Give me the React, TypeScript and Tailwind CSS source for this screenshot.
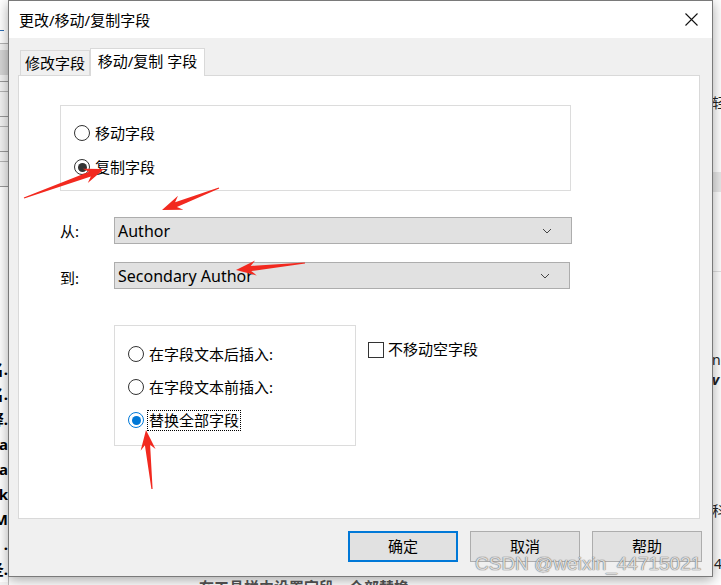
import React from 'react';

const FONT = "[font-family:'Noto_Sans','Noto_Sans_CJK_SC',sans-serif]";

type Pt = [number, number];

// red annotation arrow: tail -> tip
function arrow(tail: Pt, tip: Pt) {
  const dx = tip[0] - tail[0];
  const dy = tip[1] - tail[1];
  const len = Math.hypot(dx, dy);
  const ux = dx / len;
  const uy = dy / len;
  const nx = -uy;
  const ny = ux;
  const headLen = 20;
  const bx = tip[0] - ux * headLen;
  const by = tip[1] - uy * headLen;
  const nb = bx + ux * 5;
  const nby = by + uy * 5;
  const pts: Pt[] = [
    [tail[0] + nx * 0.6, tail[1] + ny * 0.6],
    [nb + nx * 2.6, nby + ny * 2.6],
    [bx + nx * 7.5, by + ny * 7.5],
    tip,
    [bx - nx * 7.5, by - ny * 7.5],
    [nb - nx * 2.6, nby - ny * 2.6],
    [tail[0] - nx * 0.6, tail[1] - ny * 0.6],
  ];
  return pts.map((p) => `${p[0].toFixed(1)},${p[1].toFixed(1)}`).join(' ');
}

function Radio({ checked, color = '#333333', label, focus }: { checked?: boolean; color?: string; label: string; focus?: boolean }) {
  return (
    <div className="flex items-center gap-[3px] h-[20px]">
      <span
        className="w-[16px] h-[16px] rounded-full bg-white flex items-center justify-center shrink-0"
        style={{ border: `1px solid ${checked ? color : '#333333'}` }}
      >
        {checked && <span className="w-[9px] h-[9px] rounded-full" style={{ background: color }} />}
      </span>
      <span
        className={`text-[15px] leading-[19px] text-black px-px ${focus ? 'border border-dotted border-black' : 'border border-transparent'}`}
      >
        {label}
      </span>
    </div>
  );
}

function Select({ value, width }: { value: string; width: string }) {
  return (
    <div className={`${width} h-[27px] bg-[#e1e1e1] border border-[#adadad] flex items-center justify-between pl-[3px] pr-[19px]`}>
      <span className="text-[16px] leading-[20px] text-black">{value}</span>
      <svg width="10" height="6" viewBox="0 0 10 6" fill="none" stroke="#444" strokeWidth="1">
        <path d="M1 1l4 4 4-4" />
      </svg>
    </div>
  );
}

export default function App() {
  return (
    <div className={`relative w-[721px] h-[585px] overflow-hidden bg-white ${FONT}`}>
      {/* desktop behind the dialog */}
      <div className="flex h-full">
        <div className="w-[9px] h-full flex flex-col bg-[#f3f3f3] border-r border-[#bdbdbd]">
          <div className="h-[43px] bg-white relative">
            <span className="absolute left-0 top-[30px] w-[4px] h-px bg-[#2f6fb5]" />
          </div>
          <div className="h-[7px] border-t border-[#b4b4b4]" />
          <div className="h-[25px] bg-[#d6d6d6]" />
          <div className="h-[7px] border-b border-[#9a9a9a]" />
          <div className="h-[10px] border-b border-[#b4b4b4]" />
          <div className="h-[25px] border-b border-[#9a9a9a]" />
          <div className="h-[10px] border-b border-[#b4b4b4]" />
          <div className="h-[25px] border-b border-[#9a9a9a]" />
          <div className="h-[10px] border-b border-[#b4b4b4]" />
          <div className="h-[25px] border-b border-[#9a9a9a]" />
          <div className="h-[170px] bg-white" />
          <div className="flex flex-col items-end overflow-hidden bg-white text-[15px] leading-[25px] font-bold text-black whitespace-nowrap">
            <span>名.</span>
            <span>名.</span>
            <span>释.</span>
            <span>na</span>
            <span>na</span>
            <span>k</span>
            <span>M</span>
            <span>F .</span>
            <span>圣.</span>
          </div>
        </div>
        <div className="flex-1 flex flex-col justify-end">
          <div className="h-[8px] flex items-start pl-[190px] overflow-hidden">
            <span className="text-[15px] leading-[15px] font-bold text-[#555] mt-[3px] whitespace-nowrap">
              在工具栏中设置字段，全部替换
            </span>
          </div>
        </div>
        <div className="w-[9px] h-full bg-white flex flex-col overflow-hidden text-[14px] text-[#222] whitespace-nowrap">
          <div className="h-[94px] border-l border-[#888]" />
          <span className="leading-[18px]">轻</span>
          <div className="h-[60px]" />
          <div className="h-[20px] bg-[#e8e8e8]" />
          <div className="h-[80px] border-b border-[#e0e0e0]" />
          <div className="h-[78px]" />
          <span className="leading-[20px]">ne</span>
          <span className="leading-[20px] font-bold italic">v</span>
          <div className="h-[112px]" />
          <span className="leading-[18px]">科</span>
          <div className="h-[36px]" />
          <span className="leading-[16px] border-l border-[#333] pl-px">42</span>
        </div>
      </div>

      {/* dialog window */}
      <div className="absolute left-[8px] top-0 w-[705px] h-[577px] border border-[#7a7a7a] bg-[#f0f0f0] flex flex-col shadow-[0_3px_12px_rgba(0,0,0,0.35)]">
        <div className="h-[37px] bg-white flex items-center justify-between pl-[10px] pr-[14px] shrink-0">
          <span className="text-[15px] leading-[20px] text-black">更改/移动/复制字段</span>
          <svg width="13" height="13" viewBox="0 0 13 13" stroke="#111" strokeWidth="1.1" fill="none">
            <path d="M0.5 0.5l12 12M12.5 0.5l-12 12" />
          </svg>
        </div>

        <div className="flex-1 flex flex-col pt-[10px] pl-[9px] pr-[10px]">
          {/* tabs */}
          <div className="flex items-end h-[27px] ml-[2px] mr-[2px]">
            <div className="w-[70px] h-[25px] border border-b-0 border-[#d9d9d9] bg-[#f0f0f0] flex items-center justify-center text-[15px] leading-[19px] text-black">
              修改字段
            </div>
            <div className="relative z-10 -mb-px w-[115px] h-[28px] border border-b-0 border-[#d9d9d9] bg-white flex items-start pt-[3px] justify-center text-[15px] leading-[19px] text-black">
              移动/复制 字段
            </div>
          </div>

          {/* panel */}
          <div className="h-[444px] mr-[2px] border border-[#d9d9d9] bg-white flex flex-col pl-[41px] pt-[29px]">
            <div className="w-[511px] h-[86px] border border-[#dcdcdc] flex flex-col gap-[14px] pl-[13px] pt-[17px]">
              <Radio label="移动字段" />
              <Radio label="复制字段" checked />
            </div>

            <div className="flex items-center mt-[26px]">
              <span className="w-[54px] text-[15px] leading-[20px] text-black">从:</span>
              <Select value="Author" width="w-[458px]" />
            </div>

            <div className="flex items-center mt-[18px]">
              <span className="w-[54px] text-[15px] leading-[20px] text-black mt-[4px]">到:</span>
              <Select value="Secondary Author" width="w-[456px]" />
            </div>

            <div className="flex items-start mt-[36px] ml-[54px] gap-[12px]">
              <div className="w-[242px] h-[121px] border border-[#dcdcdc] flex flex-col gap-[13px] pl-[13px] pt-[18px]">
                <Radio label="在字段文本后插入:" />
                <Radio label="在字段文本前插入:" />
                <Radio label="替换全部字段" checked color="#0078d7" focus />
              </div>
              <div className="flex items-center gap-[4px] mt-[15px]">
                <span className="w-[16px] h-[16px] border border-[#333] bg-white" />
                <span className="text-[15px] leading-[19px] text-black">不移动空字段</span>
              </div>
            </div>
          </div>

          {/* buttons */}
          <div className="flex justify-end gap-[12px] mt-[12px]">
            <button className="w-[110px] h-[31px] border-2 border-[#0078d7] bg-[#e1e1e1] text-[15px] text-black">确定</button>
            <button className="w-[110px] h-[31px] border border-[#adadad] bg-[#e1e1e1] text-[15px] text-black">取消</button>
            <button className="w-[110px] h-[31px] border border-[#adadad] bg-[#e1e1e1] text-[15px] text-black">帮助</button>
          </div>
        </div>
      </div>

      {/* red annotation arrows */}
      <svg className="absolute inset-0 pointer-events-none" width="721" height="585" viewBox="0 0 721 585">
        <g fill="#f2291f">
          <polygon points={arrow([24, 198], [104, 169])} />
          <polygon points={arrow([219, 188], [162, 210])} />
          <polygon points={arrow([305, 263], [236, 270])} />
          <polygon points={arrow([152, 489], [146, 430])} />
        </g>
      </svg>

      {/* watermark */}
      <span className="absolute left-[475px] top-[553px] text-[19px] leading-[22px] [font-family:'Liberation_Sans',Arial,sans-serif] text-[rgba(255,255,255,0.75)] [text-shadow:0_0_1px_#666,0_0_1px_#666] whitespace-nowrap pointer-events-none">
        CSDN @weixin_44715021
      </span>
    </div>
  );
}
